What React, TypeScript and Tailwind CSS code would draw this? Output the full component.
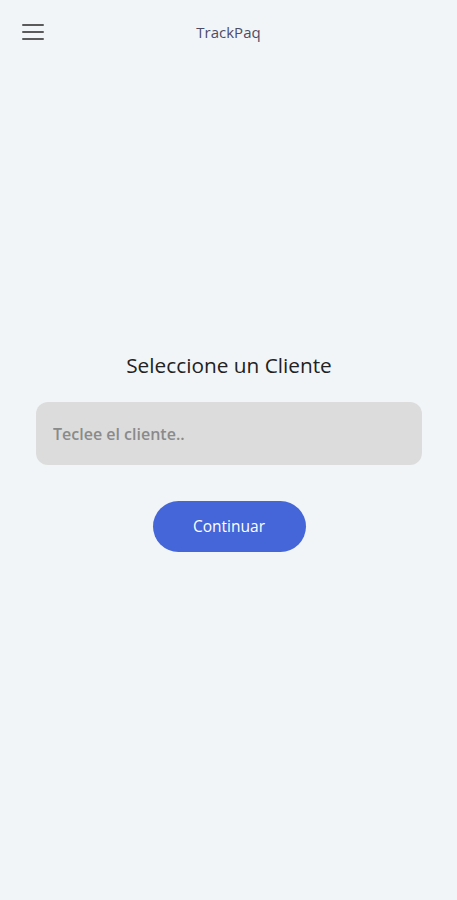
import React from "react";

const App = () => {
  return (
    <div className="min-h-[900px] w-full bg-[#f1f5f7] font-['Open_Sans',sans-serif]">
      <header className="h-16 w-full relative flex items-center justify-center">
        <button className="absolute left-[22px] top-[24px] flex flex-col gap-[5px]" aria-label="menu">
          <span className="block w-[22px] h-[2px] bg-[#5a5a5a] rounded" />
          <span className="block w-[22px] h-[2px] bg-[#5a5a5a] rounded" />
          <span className="block w-[22px] h-[2px] bg-[#5a5a5a] rounded" />
        </button>
        <span className="text-[15px] text-[#4d4d66]">TrackPaq</span>
      </header>

      <main className="flex flex-col items-center pl-9 pr-[35px] pt-[287px]">
        <h1 className="text-[20.8px] leading-7 text-[#222]">Seleccione un Cliente</h1>
        <input
          className="mt-[23px] w-full h-[63px] rounded-xl bg-[#dcdcdc] px-[17px] text-[16px] font-semibold text-[#333] placeholder:text-[#8a8a8a] outline-none"
          placeholder="Teclee el cliente.."
        />
        <button className="mt-[36px] w-[153px] h-[51px] rounded-full bg-[#4466d9] text-white text-[15.5px] font-medium">
          Continuar
        </button>
      </main>
    </div>
  );
};

export default App;
